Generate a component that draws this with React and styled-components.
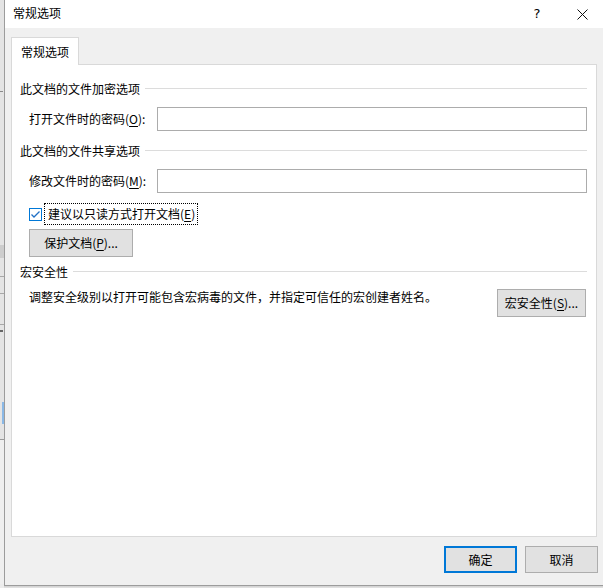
import React from "react";
import styled, { createGlobalStyle } from "styled-components";

const Global = createGlobalStyle`
  html, body { margin: 0; padding: 0; background: #f0f0f0; overflow: hidden; }
  * { box-sizing: border-box; }
`;

const FONT = `"Noto Sans CJK SC", "Microsoft YaHei", "Noto Sans", sans-serif`;

const Screen = styled.div`
  width: 603px;
  height: 588px;
  display: flex;
  font-family: ${FONT};
  font-size: 12px;
  line-height: 16px;
  color: #000;
  background: #ececec;
`;

const BgStrip = styled.div`
  width: 4px;
  display: flex;
  flex-direction: column;
  flex-shrink: 0;
`;

const StripSeg = styled.div`
  height: ${(p) => p.h}px;
  background: ${(p) => p.bg || "#e4e4e4"};
  border-bottom: ${(p) => (p.line ? `1px solid ${p.line}` : "none")};
  display: flex;
  align-items: center;
`;

const StripMark = styled.div`
  width: 3px;
  height: ${(p) => p.h || 1}px;
  background: ${(p) => p.c || "#777"};
  margin-left: ${(p) => p.ml || 0}px;
`;

const DialogWrap = styled.div`
  flex: 1;
  display: flex;
  flex-direction: column;
  height: 588px;
`;

const Dialog = styled.div`
  height: 586px;
  display: flex;
  flex-direction: column;
  border-left: 1px solid #9c9c9c;
  border-bottom: 1px solid #9c9c9c;
  background: #f0f0f0;
`;

const Shadow = styled.div`
  flex: 1;
  background: linear-gradient(#cfcfcf, #e6e6e6);
`;

const TitleBar = styled.div`
  height: 28px;
  background: #fff;
  display: flex;
  align-items: center;
  padding-left: 8px;
  padding-right: 6px;
`;

const TitleText = styled.div`
  flex: 1;
  padding-bottom: 2px;
`;

const TitleButton = styled.div`
  width: 30px;
  height: 26px;
  display: flex;
  align-items: center;
  justify-content: center;
  font-family: "DejaVu Sans", sans-serif;
  font-size: 13px;
  margin-left: ${(p) => p.gap || 0}px;
`;

const Body = styled.div`
  flex: 1;
  display: flex;
  flex-direction: column;
  padding: 9px 6px 12px 6px;
`;

const TabStrip = styled.div`
  display: flex;
  position: relative;
  z-index: 1;
  margin-bottom: -1px;
`;

const Tab = styled.div`
  height: 28px;
  width: 68px;
  background: #fff;
  border: 1px solid #d9d9d9;
  border-bottom: none;
  display: flex;
  align-items: center;
  justify-content: center;
  padding-top: 1px;
`;

const Panel = styled.div`
  height: 473px;
  background: #fff;
  border: 1px solid #d9d9d9;
  padding: 16px 9px 0 8px;
  display: flex;
  flex-direction: column;
`;

const Heading = styled.div`
  display: flex;
  align-items: center;
  height: 16px;
  margin-top: ${(p) => p.mt || 0}px;
  gap: 5px;
  &::after {
    content: "";
    flex: 1;
    height: 1px;
    background: #dcdcdc;
    margin-top: -1px;
  }
`;

const Row = styled.div`
  display: flex;
  align-items: ${(p) => p.align || "center"};
  margin-top: ${(p) => p.mt || 0}px;
  padding-left: 9px;
`;

const Label = styled.div`
  width: 128px;
  flex-shrink: 0;
`;

const Input = styled.div`
  flex: 1;
  height: 24px;
  border: 1px solid #acacac;
  background: #fff;
`;

const Key = styled.span`
  text-decoration: underline;
  text-underline-offset: 2px;
`;

const CheckBox = styled.div`
  width: 13px;
  height: 13px;
  border: 1px solid #0078d7;
  background: #fff;
  display: flex;
  align-items: center;
  justify-content: center;
  flex-shrink: 0;
`;

const FocusLabel = styled.div`
  margin-left: 2px;
  height: 22px;
  padding: 0 2px 0 3px;
  border: 1px dotted #000;
  display: flex;
  align-items: center;
`;

const Button = styled.div`
  width: ${(p) => p.w}px;
  height: ${(p) => p.h || 28}px;
  background: #e1e1e1;
  border: ${(p) => (p.primary ? "2px solid #0078d7" : "1px solid #adadad")};
  display: flex;
  align-items: center;
  justify-content: center;
  flex-shrink: 0;
  margin-left: ${(p) => p.ml || 0}px;
  margin-right: ${(p) => p.mr || 0}px;
`;

const Desc = styled.div`
  flex: 1;
`;

const Footer = styled.div`
  display: flex;
  justify-content: flex-end;
  margin-top: 9px;
  margin-right: -1px;
  gap: 8px;
`;

export default function App() {
  return (
    <>
      <Global />
      <Screen>
        <BgStrip>
          <StripSeg h={88} />
          <StripSeg h={6} bg="#e4e4e4">
            <StripMark c="#8a8a8a" />
          </StripSeg>
          <StripSeg h={151} />
          <StripSeg h={13} bg="#cdcdcd" />
          <StripSeg h={19} line="#a8a8a8" />
          <StripSeg h={17} line="#a8a8a8" />
          <StripSeg h={31} line="#a8a8a8" />
          <StripSeg h={12}>
            <StripMark c="#666" h={2} />
          </StripSeg>
          <StripSeg h={65} />
          <StripSeg h={22}>
            <StripMark c="#8ab8e6" h={22} ml={2} />
          </StripSeg>
          <StripSeg h={16} line="#9a9a9a" />
          <StripSeg h={144} bg="#efefef" />
        </BgStrip>
        <DialogWrap>
          <Dialog>
            <TitleBar>
              <TitleText>常规选项</TitleText>
              <TitleButton>?</TitleButton>
              <TitleButton gap={15}>
                <svg width="11" height="11" viewBox="0 0 11 11">
                  <path d="M0.5 0.5 L10.5 10.5 M10.5 0.5 L0.5 10.5" stroke="#111" strokeWidth="1" fill="none" />
                </svg>
              </TitleButton>
            </TitleBar>
            <Body>
              <TabStrip>
                <Tab>常规选项</Tab>
              </TabStrip>
              <Panel>
                <Heading>此文档的文件加密选项</Heading>
                <Row mt={10}>
                  <Label>
                    打开文件时的密码(<Key>O</Key>):
                  </Label>
                  <Input />
                </Row>
                <Heading mt={12}>此文档的文件共享选项</Heading>
                <Row mt={10}>
                  <Label>
                    修改文件时的密码(<Key>M</Key>):
                  </Label>
                  <Input />
                </Row>
                <Row mt={10}>
                  <CheckBox>
                    <svg width="11" height="11" viewBox="0 0 11 11">
                      <path d="M1.5 5.5 L4 8 L9.5 2.5" stroke="#1f6fc5" strokeWidth="1.3" fill="none" />
                    </svg>
                  </CheckBox>
                  <FocusLabel>
                    建议以只读方式打开文档(<Key>E</Key>)
                  </FocusLabel>
                </Row>
                <Row mt={4}>
                  <Button w={104}>
                    保护文档(<Key>P</Key>)...
                  </Button>
                </Row>
                <Heading mt={7}>宏安全性</Heading>
                <Row mt={9} align="flex-start">
                  <Desc>调整安全级别以打开可能包含宏病毒的文件，并指定可信任的宏创建者姓名。</Desc>
                  <Button w={89} mr={1}>
                    宏安全性(<Key>S</Key>)...
                  </Button>
                </Row>
              </Panel>
              <Footer>
                <Button w={73} h={27} primary>
                  确定
                </Button>
                <Button w={73} h={27}>
                  取消
                </Button>
              </Footer>
            </Body>
          </Dialog>
          <Shadow />
        </DialogWrap>
      </Screen>
    </>
  );
}
